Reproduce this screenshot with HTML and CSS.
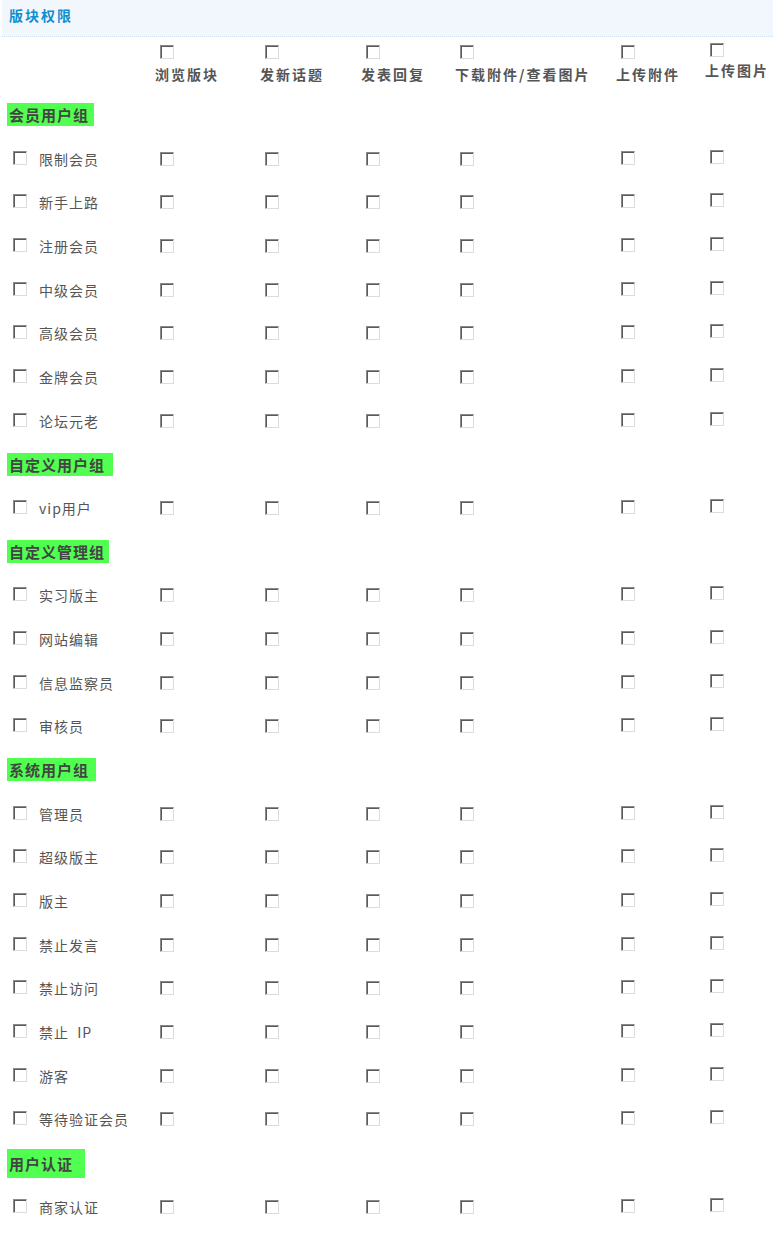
FILE: index.html
```html
<!DOCTYPE html>
<html lang="zh-CN">
<head>
<meta charset="utf-8">
<title>版块权限</title>
<link rel="stylesheet" href="styles.css">
</head>
<body>
<div class="panel-head"><span class="panel-title">版块权限</span></div>
<div class="perm">
  <div class="row head-row">
    <div class="hcell"></div>
    <div class="hcell"><input type="checkbox" class="cb"><span class="hlabel">浏览版块</span></div>
    <div class="hcell"><input type="checkbox" class="cb"><span class="hlabel">发新话题</span></div>
    <div class="hcell"><input type="checkbox" class="cb"><span class="hlabel">发表回复</span></div>
    <div class="hcell"><input type="checkbox" class="cb"><span class="hlabel">下载附件/查看图片</span></div>
    <div class="hcell"><input type="checkbox" class="cb"><span class="hlabel">上传附件</span></div>
    <div class="hcell last"><input type="checkbox" class="cb"><span class="hlabel">上传图片</span></div>
  </div>
</div>
<div class="perm" id="body"></div>
<script src="app.js"></script>
</body>
</html>
```
FILE: app.js
```js
var groups = [
  { name: "会员用户组", w: "g1", items: ["限制会员", "新手上路", "注册会员", "中级会员", "高级会员", "金牌会员", "论坛元老"] },
  { name: "自定义用户组", w: "g2", items: ["vip用户"] },
  { name: "自定义管理组", w: "g3", items: ["实习版主", "网站编辑", "信息监察员", "审核员"] },
  { name: "系统用户组", w: "g4", items: ["管理员", "超级版主", "版主", "禁止发言", "禁止访问", "禁止\u00a0 IP", "游客", "等待验证会员"] },
  { name: "用户认证", w: "g5", items: ["商家认证"] }
];
var body = document.getElementById("body");
groups.forEach(function (g) {
  var gr = document.createElement("div");
  gr.className = "row group-row";
  gr.innerHTML = '<div class="group-label ' + g.w + '">' + g.name + '</div>';
  body.appendChild(gr);
  g.items.forEach(function (it) {
    var r = document.createElement("div");
    r.className = "row item-row";
    var html = '<div class="cell name-cell"><input type="checkbox" class="cb"><span class="name">' + it + '</span></div>';
    for (var i = 0; i < 6; i++) {
      html += '<div class="cell' + (i === 5 ? ' last' : '') + (i === 4 ? ' fifth' : '') + '"><input type="checkbox" class="cb"></div>';
    }
    r.innerHTML = html;
    body.appendChild(r);
  });
});
```
FILE: styles.css
```css
html, body {
  margin: 0;
  padding: 0;
  background: #fff;
}
body {
  font-family: "Noto Sans CJK SC", "Liberation Sans", sans-serif;
  color: #555;
  width: 773px;
}
.panel-head {
  margin-left: 2px;
  height: 36px;
  background: #f1f7fd;
  border-bottom: 1px dotted #cfe0f0;
  display: flex;
  align-items: center;
  padding-left: 7px;
}
.panel-title {
  font-size: 14px;
  font-weight: bold;
  color: #0e8fcf;
  letter-spacing: 2px;
  line-height: 20px;
  margin-top: -6px;
}
.row {
  display: grid;
  grid-template-columns: 155px 105px 101px 94px 161px 89px 68px;
  align-items: center;
}
.head-row {
  height: 56px;
  align-items: start;
}
.hcell {
  display: flex;
  flex-direction: column;
  align-items: flex-start;
  padding-top: 8px;
}
.hcell.last {
  padding-top: 6px;
}
.hcell.last .hlabel {
  margin-top: 3px;
}
.hlabel {
  font-size: 14px;
  font-weight: bold;
  letter-spacing: 2px;
  line-height: 20px;
  margin-top: 5px;
  white-space: nowrap;
  color: #555;
}
.cb {
  -webkit-appearance: none;
  appearance: none;
  width: 14px;
  height: 14px;
  margin: 0 0 0 5px;
  padding: 0;
  box-sizing: border-box;
  border: 1px solid;
  border-color: #8a8a8a #dcdcdc #dcdcdc #8a8a8a;
  box-shadow: inset 1px 1px 0 #5a5a5a;
  background: #fff;
  display: block;
}
.item-row,
.group-row {
  height: 43.68px;
}
.group-row {
  display: flex;
  align-items: center;
}
.group-label {
  background: #50ff50;
  height: 23px;
  line-height: 23px;
  margin-left: 7px;
  padding-left: 2px;
  font-size: 15px;
  font-weight: bold;
  letter-spacing: 1px;
  color: #444;
  box-sizing: border-box;
  white-space: nowrap;
}
.g1 { width: 87px; }
.g2 { width: 106px; }
.g3 { width: 102px; }
.g4 { width: 89px; }
.g5 { width: 78px; height: 29px; line-height: 29px; margin-top: 2px; }
.cell {
  display: flex;
  align-items: center;
}
.name-cell {
  padding-left: 8px;
}
.name-cell .cb {
  margin-top: -2px;
}
.name {
  font-size: 14px;
  letter-spacing: 1px;
  margin-left: 12px;
  line-height: 20px;
  color: #555;
  white-space: nowrap;
}
.item-row .cell.last .cb {
  margin-top: -4px;
}
.item-row .cell.fifth .cb {
  margin-top: -2px;
}
```
